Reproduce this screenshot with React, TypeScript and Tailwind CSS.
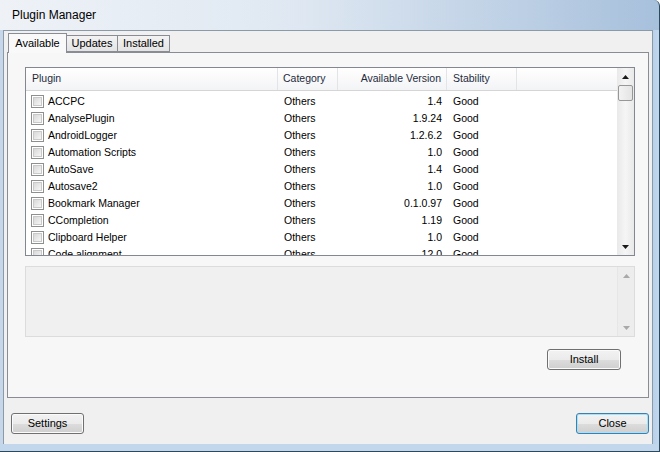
import React from "react";

const rows: [string, string, string, string][] = [
  ["ACCPC", "Others", "1.4", "Good"],
  ["AnalysePlugin", "Others", "1.9.24", "Good"],
  ["AndroidLogger", "Others", "1.2.6.2", "Good"],
  ["Automation Scripts", "Others", "1.0", "Good"],
  ["AutoSave", "Others", "1.4", "Good"],
  ["Autosave2", "Others", "1.0", "Good"],
  ["Bookmark Manager", "Others", "0.1.0.97", "Good"],
  ["CCompletion", "Others", "1.19", "Good"],
  ["Clipboard Helper", "Others", "1.0", "Good"],
  ["Code alignment", "Others", "12.0", "Good"],
];

function Arrow({ up, dim }: { up?: boolean; dim?: boolean }) {
  return (
    <svg width="7" height="4" viewBox="0 0 7 4" className={up ? "" : "rotate-180"}>
      <path d="M3.5 0 L7 4 L0 4 Z" fill={dim ? "#a9a9a9" : "#1a1a1a"} />
    </svg>
  );
}

function Checkbox() {
  return (
    <div className="w-[13px] h-[13px] border border-[#8e8f8f] bg-white p-[1px] shrink-0">
      <div className="w-full h-full bg-[linear-gradient(135deg,#d8d8d8,#f6f6f6)] border border-[#c9c9c9]" />
    </div>
  );
}

function Button({ label, primary, className }: { label: string; primary?: boolean; className?: string }) {
  return (
    <div
      className={`h-[21px] w-[73px] rounded-[3px] border flex items-center justify-center text-[11px] text-black ${
        primary
          ? "border-[#3c7fb1] shadow-[inset_0_0_0_1px_#a7e1f8]"
          : "border-[#707070] shadow-[inset_0_0_0_1px_#fbfbfb]"
      } bg-[linear-gradient(to_bottom,#f2f2f2_0%,#ebebeb_50%,#dddddd_51%,#cfcfcf_100%)] ${className ?? ""}`}
    >
      {label}
    </div>
  );
}

export default function App() {
  return (
    <div className="w-[660px] h-[452px] overflow-hidden bg-white font-['Liberation_Sans',Arial,sans-serif]">
      <div className="w-[660px] h-[452px] flex flex-col border-r border-b border-[#2c4a5c] rounded-tr-[6px] overflow-hidden bg-[linear-gradient(to_right,#eef2f7_0%,#dfe8f2_45%,#a7c0dc_100%)]">
        {/* title bar */}
        <div className="h-[30px] shrink-0 flex items-center pl-[12px] text-[12px] text-black">
          Plugin Manager
        </div>
        <div className="flex flex-1 min-h-0">
          <div className="w-[3px] shrink-0 bg-[#c7d7e9]" />
          {/* client area */}
          <div className="flex-1 flex flex-col bg-[#f0f0f0] border-l border-t border-[#8a9aa9] text-[10.5px] text-black">
            {/* tabs */}
            <div className="flex items-end h-[21px] pl-[4px]">
              <div className="relative z-10 h-[20px] w-[59px] border border-b-0 border-[#898c95] bg-[#f9f9f9] flex items-center justify-center -mb-[1px] text-[11px]">
                Available
              </div>
              <div className="h-[17px] w-[51px] border border-l-0 border-[#898c95] bg-[linear-gradient(to_bottom,#f3f3f3,#e3e3e3)] flex items-center justify-center text-[11px]">
                Updates
              </div>
              <div className="h-[17px] w-[52px] border border-l-0 border-[#898c95] bg-[linear-gradient(to_bottom,#f3f3f3,#e3e3e3)] flex items-center justify-center text-[11px]">
                Installed
              </div>
            </div>
            {/* tab panel */}
            <div className="mx-[3px] h-[346px] border border-[#898c95] bg-[#f7f7f7] flex flex-col pl-[17px] pr-[13px] pt-[14px]">
              {/* list */}
              <div className="h-[189px] border border-[#828790] bg-white flex">
                <div className="flex-1 flex flex-col overflow-hidden">
                  <div className="h-[23px] shrink-0 flex border-b border-[#d5d5d5] bg-[linear-gradient(to_bottom,#ffffff,#f3f4f6)] text-[#1e2b3c]">
                    <div className="w-[252px] pl-[6px] flex items-center border-r border-[#e2e4e8]">Plugin</div>
                    <div className="w-[60px] pl-[5px] flex items-center border-r border-[#e2e4e8]">Category</div>
                    <div className="w-[109px] pr-[5px] flex items-center justify-end border-r border-[#e2e4e8]">Available Version</div>
                    <div className="w-[70px] pl-[6px] flex items-center border-r border-[#e2e4e8]">Stability</div>
                    <div className="flex-1" />
                  </div>
                  <div className="pt-[2px]">
                    {rows.map((r) => (
                      <div key={r[0]} className="h-[17px] flex items-center">
                        <div className="w-[252px] flex items-center pl-[5px] gap-[4px]">
                          <Checkbox />
                          <span>{r[0]}</span>
                        </div>
                        <div className="w-[60px] pl-[6px]">{r[1]}</div>
                        <div className="w-[109px] pr-[5px] text-right">{r[2]}</div>
                        <div className="w-[70px] pl-[6px]">{r[3]}</div>
                      </div>
                    ))}
                  </div>
                </div>
                {/* scrollbar */}
                <div className="w-[17px] shrink-0 flex flex-col bg-[linear-gradient(to_right,#e9e9e9,#f5f5f5,#e9e9e9)]">
                  <div className="h-[17px] flex items-center justify-center">
                    <Arrow up />
                  </div>
                  <div className="h-[16px] mx-[1px] rounded-[2px] border border-[#979797] bg-[linear-gradient(to_right,#f3f3f3,#e4e4e4)]" />
                  <div className="flex-1" />
                  <div className="h-[17px] flex items-center justify-center">
                    <Arrow />
                  </div>
                </div>
              </div>
              {/* description */}
              <div className="mt-[10px] h-[71px] border border-[#dcdcdc] bg-[#f0f0f0] flex">
                <div className="flex-1" />
                <div className="w-[17px] shrink-0 flex flex-col justify-between border-l border-[#e6e6e6] bg-[#ededed]">
                  <div className="h-[17px] flex items-center justify-center">
                    <Arrow up dim />
                  </div>
                  <div className="h-[17px] flex items-center justify-center">
                    <Arrow dim />
                  </div>
                </div>
              </div>
              <div className="flex justify-end mt-[12px] pr-[14px]">
                <Button label="Install" className="w-[74px]" />
              </div>
            </div>
            {/* bottom buttons */}
            <div className="flex justify-between items-center pl-[7px] pr-[3px] mt-[15px]">
              <Button label="Settings" />
              <Button label="Close" primary />
            </div>
          </div>
          <div className="w-[7px] shrink-0 bg-[linear-gradient(to_right,#b8d0ea,#c3d8ee)] border-l border-[#8a9aa9]" />
        </div>
        <div className="h-[7px] shrink-0 bg-[#c2d6ec]" />
      </div>
    </div>
  );
}
